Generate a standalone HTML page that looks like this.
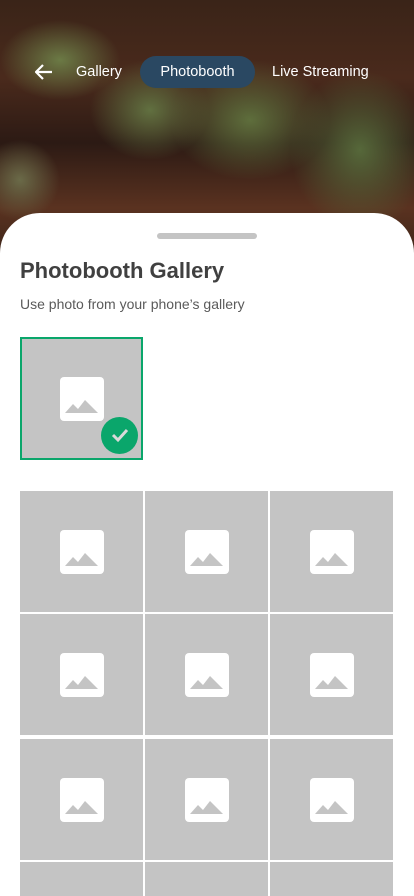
<!DOCTYPE html>
<html style="width:414px;height:896px;overflow:hidden"><head><meta charset="utf-8"><style>
*{margin:0;padding:0;box-sizing:border-box}
body{width:414px;height:896px;overflow:hidden;position:relative;font-family:"Liberation Sans",sans-serif;background:#fff}
.bg{position:absolute;left:0;top:0;width:414px;height:260px;background:
radial-gradient(ellipse 60px 40px at 60px 60px,#6b7a45 0%,transparent 100%),
radial-gradient(ellipse 80px 60px at 250px 120px,#5e6e3c 0%,transparent 100%),
radial-gradient(ellipse 70px 80px at 360px 150px,#56683a 0%,transparent 100%),
radial-gradient(ellipse 60px 50px at 150px 110px,#617040 0%,transparent 100%),
radial-gradient(ellipse 40px 40px at 20px 180px,#6a6a48 0%,transparent 100%),
linear-gradient(180deg,#3a2418 0%,#4a2a1c 30%,#2c1a14 55%,#5a3220 80%,#3a2418 100%)}
.nav{position:absolute;top:56px;left:0;width:414px;height:32px;color:#fff;font-size:14.5px}
.nav span{position:absolute;top:8px;line-height:17px}
.pill{position:absolute;left:140px;top:0;width:115px;height:32px;border-radius:16px;background:#2a4862;color:#fff;text-align:center;line-height:32px;font-size:14.5px}
.sheet{position:absolute;left:0;top:213px;width:414px;height:683px;background:#fff;border-radius:40px 40px 0 0}
.handle{position:absolute;left:157px;top:233px;width:100px;height:6px;border-radius:3px;background:#c4c4c4}
h1{position:absolute;left:20px;top:258px;font-size:22px;font-weight:bold;color:#404040}
.sub{position:absolute;left:20px;top:296px;font-size:14px;color:#5a5a5a}
.tile{position:absolute;width:123px;height:121px;background:#c4c4c4;overflow:hidden}
.tile svg{position:absolute;left:40px;top:39px}
.sel{left:20px;top:337px;height:123px;border:2px solid #0aa66b;overflow:visible}
.sel svg{left:38px;top:38px}
.chk{position:absolute;left:79px;top:78px;width:37px;height:37px;border-radius:50%;background:#0aa66b}
</style></head><body>
<div class="bg"></div>
<div class="nav">
<svg style="position:absolute;left:35px;top:8px" width="18" height="16" viewBox="0 0 18 16"><path d="M17 8H2M8 1L1 8l7 7" stroke="#fff" stroke-width="2.2" fill="none"/></svg>
<span style="left:76px">Gallery</span>
<div class="pill">Photobooth</div>
<span style="left:272px">Live Streaming</span>
</div>
<div class="sheet"></div>
<div class="handle"></div>
<h1>Photobooth Gallery</h1>
<div class="sub">Use photo from your phone’s gallery</div>
<div class="tile sel"><svg width="44" height="44" viewBox="0 0 44 44"><rect width="44" height="44" rx="4" fill="#fff"/><path d="M5 36l8-9 5 5 7-9 13 13z" fill="#c4c4c4"/></svg><div class="chk"><svg style="left:9px;top:10px" width="20" height="16" viewBox="0 0 20 16"><path d="M3 8l5 5 9-10" stroke="#d9d9d9" stroke-width="3" fill="none"/></svg></div></div>
<div id="g"></div>
<script>
var s='';var xs=[20,145,270],ys=[491,614,739,862];
ys.forEach(function(y){xs.forEach(function(x){var h=y==862?34:121;s+='<div class="tile" style="left:'+x+'px;top:'+y+'px;height:'+h+'px"><svg width="44" height="44" viewBox="0 0 44 44"><rect width="44" height="44" rx="4" fill="#fff"/><path d="M5 36l8-9 5 5 7-9 13 13z" fill="#c4c4c4"/></svg></div>'})});
document.getElementById('g').innerHTML=s;
</script>
</body></html>
